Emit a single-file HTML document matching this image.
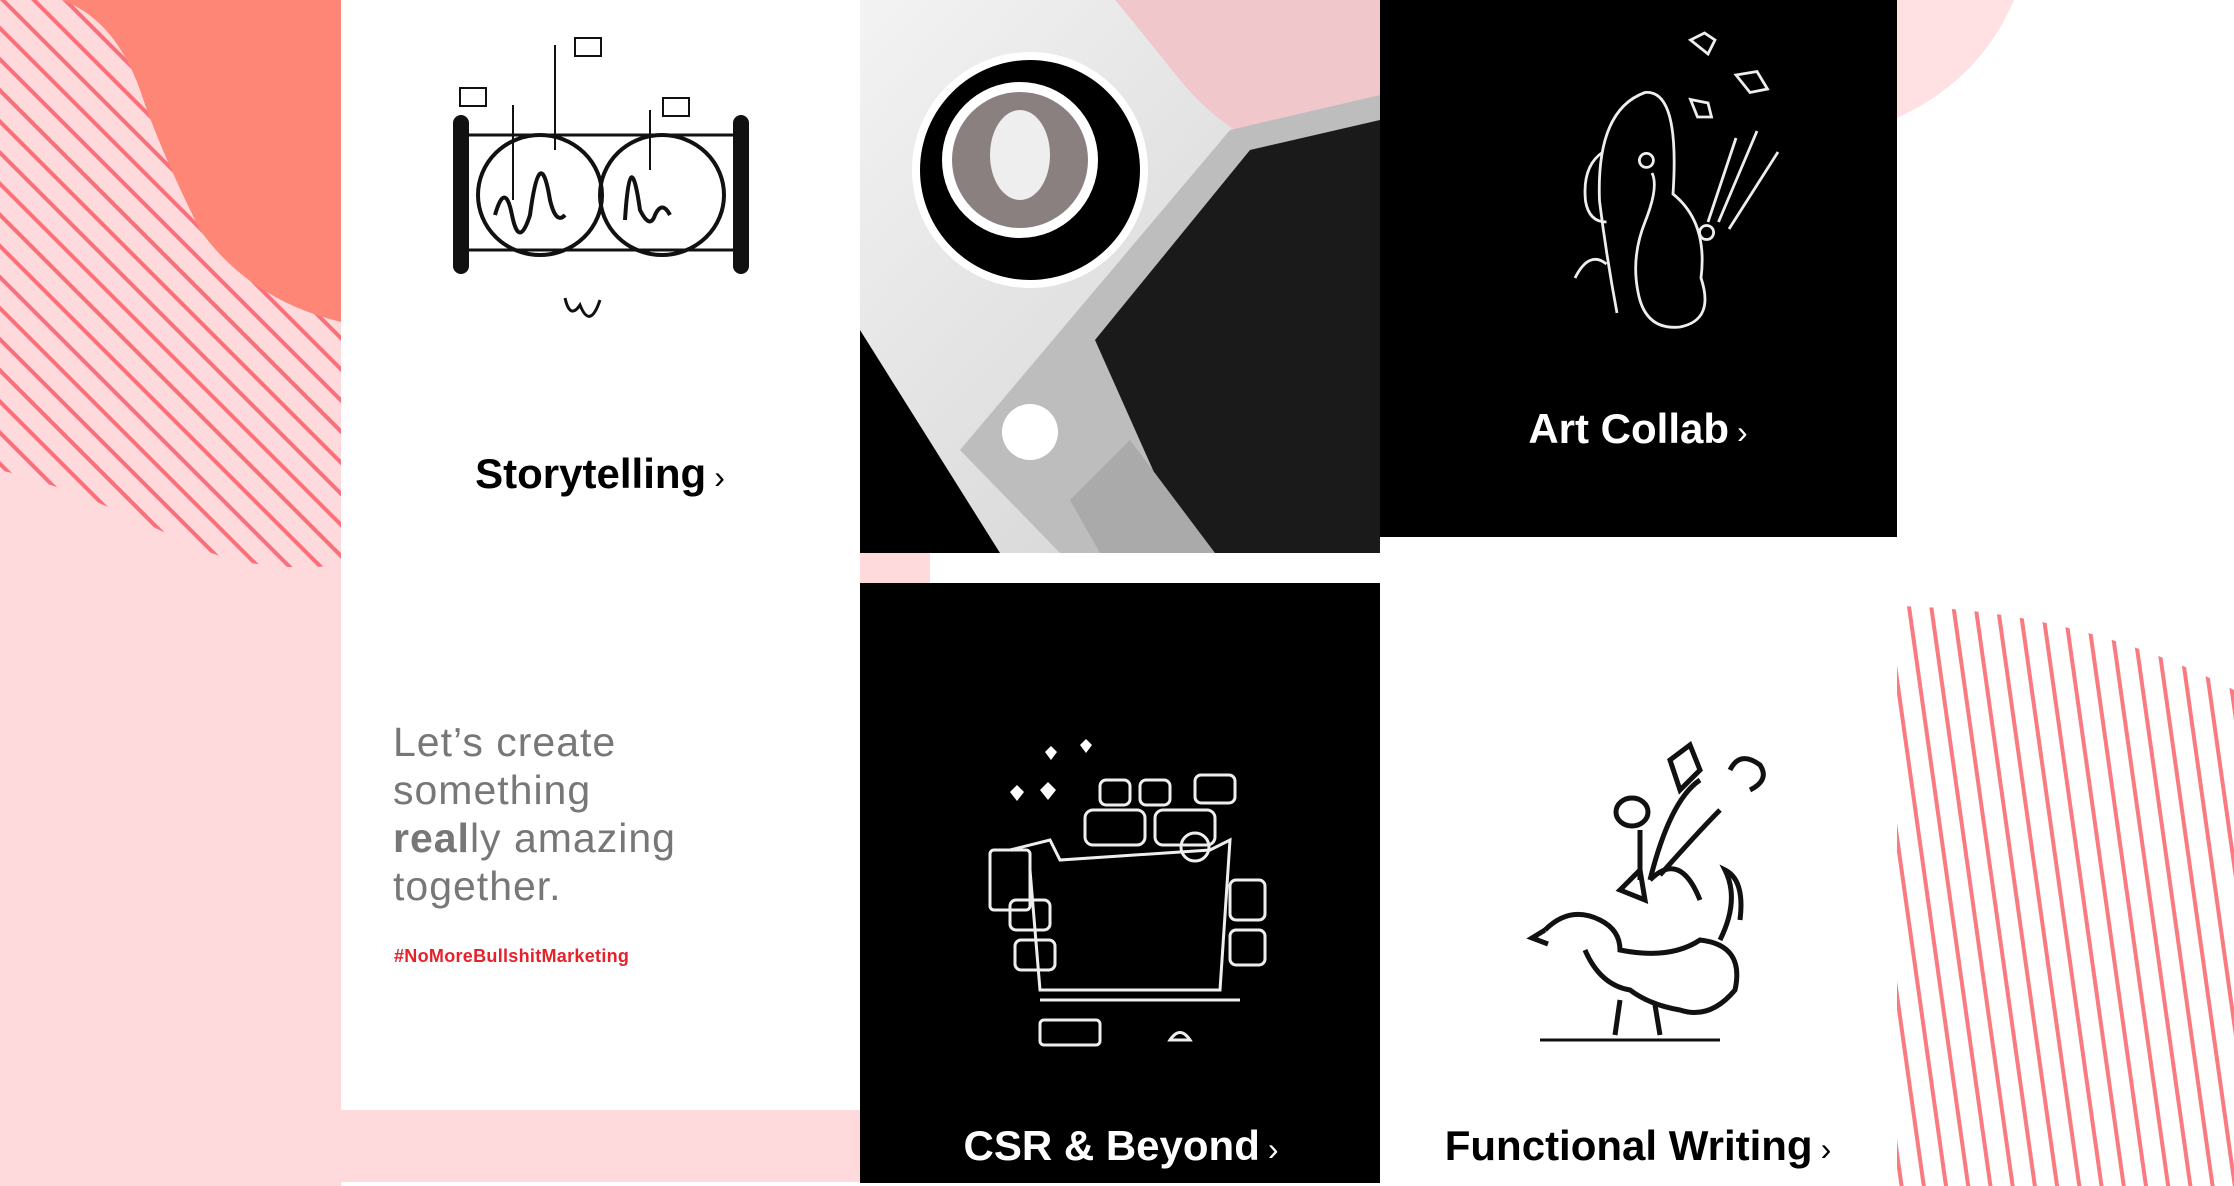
<!DOCTYPE html>
<html><head><meta charset="utf-8"><style>
*{margin:0;padding:0;box-sizing:border-box}
body{width:2234px;height:1186px;overflow:hidden;background:#fff;font-family:"Liberation Sans",sans-serif;position:relative}
.abs{position:absolute}
.lbl{position:absolute;font-weight:bold;font-size:42px;letter-spacing:0px;white-space:nowrap;transform:translateX(-50%)}
.lbl span{font-weight:normal;font-size:32px;margin-left:8px}
</style></head><body>
<svg class="abs" style="left:0;top:0" width="2234" height="1186">
<defs>
<pattern id="dg" width="22" height="22" patternUnits="userSpaceOnUse" patternTransform="rotate(-45)">
<rect width="22" height="22" fill="#ffdadd"/><rect x="0" width="4" height="22" fill="#f9707a"/></pattern>
<pattern id="vg" width="22" height="22" patternUnits="userSpaceOnUse" patternTransform="rotate(-8)">
<rect width="22" height="22" fill="#fff"/><rect x="0" width="4" height="22" fill="#f97a80"/></pattern>
<clipPath id="rc"><path d="M1897 606 L1897 1186 L2234 1186 L2234 690 Q2080 610 1897 606Z"/></clipPath>
<linearGradient id="ph" x1="0" y1="0" x2="1" y2="1"><stop offset="0" stop-color="#f3f3f3"/><stop offset="1" stop-color="#cfcfcf"/></linearGradient>
</defs>
<rect x="0" y="0" width="341" height="1186" fill="#ffdadd"/>
<path d="M0 0 L341 0 L341 565 Q250 575 180 540 Q80 490 0 470Z" fill="url(#dg)"/>
<path d="M62 0 L341 0 L341 322 Q250 300 200 230 Q160 150 140 90 Q115 20 62 0Z" fill="#fd8677"/>
<rect x="341" y="1110" width="520" height="72" fill="#ffdadd"/>
<path d="M1897 0 L2014 0 Q1980 80 1897 118Z" fill="#ffe0e3"/>
<rect x="1897" y="600" width="337" height="586" fill="url(#vg)" clip-path="url(#rc)"/>
<rect x="860" y="553" width="70" height="30" fill="#ffdadd"/>
<!-- photo -->
<rect x="860" y="0" width="520" height="553" fill="url(#ph)"/>
<path d="M860 300 L860 553 L1000 553 L860 330Z" fill="#000"/>
<path d="M1380 110 L1380 553 L1200 553 L1230 480Z" fill="#111"/>
<path d="M1115 0 L1380 0 L1380 120 L1290 160 Q1220 130 1180 80 Q1140 30 1115 0Z" fill="#f0c8cc"/>
<path d="M960 450 L1230 130 L1380 95 L1380 553 L1060 553Z" fill="#bdbdbd"/>
<path d="M1095 340 L1250 150 L1380 120 L1380 553 L1190 553Z" fill="#1a1a1a"/>
<path d="M1070 500 L1130 440 L1215 553 L1100 553Z" fill="#aaa"/>
<circle cx="1030" cy="432" r="28" fill="#fff"/>
<circle cx="1030" cy="170" r="118" fill="#fff"/>
<circle cx="1030" cy="170" r="110" fill="#000"/>
<circle cx="1020" cy="160" r="78" fill="#fff"/>
<circle cx="1020" cy="160" r="68" fill="#8a8080"/>
<ellipse cx="1020" cy="155" rx="30" ry="45" fill="#eee"/>
<rect x="1380" y="0" width="517" height="537" fill="#000"/>
<rect x="860" y="583" width="520" height="600" fill="#000"/>
<!-- glasses -->
<g fill="none" stroke="#111" stroke-width="4">
<rect x="455" y="117" width="12" height="155" rx="6" fill="#111"/>
<rect x="735" y="117" width="12" height="155" rx="6" fill="#111"/>
<path d="M467 135 L735 135 M467 250 L735 250" stroke-width="3"/>
<ellipse cx="540" cy="195" rx="62" ry="60"/><ellipse cx="662" cy="195" rx="62" ry="60"/>
<path d="M495 215 Q505 180 512 215 T530 215 Q540 140 550 200 Q556 225 565 215"/>
<path d="M625 220 Q630 140 640 210 Q650 230 655 215 Q662 200 670 215"/>
<path d="M565 298 Q570 320 580 305 Q590 330 600 300" stroke-width="3"/>
<path d="M513 105 L513 200 M555 45 L555 150 M650 110 L650 170" stroke-width="2"/>
<rect x="460" y="88" width="26" height="18" stroke-width="2"/><rect x="575" y="38" width="26" height="18" stroke-width="2"/><rect x="663" y="98" width="26" height="18" stroke-width="2"/>
</g>
<!-- art collab -->
<g fill="none" stroke="#eee" stroke-width="4" transform="translate(525,12) scale(0.7)">
<path d="M1535 270 Q1530 140 1600 115 Q1650 110 1640 260 Q1690 300 1680 380 Q1700 440 1650 450 Q1600 455 1590 400 Q1580 350 1600 300 Q1620 250 1610 230"/>
<path d="M1535 270 Q1545 350 1560 430 M1540 200 Q1510 220 1515 270 Q1520 300 1545 300"/>
<path d="M1500 380 Q1520 340 1545 360"/>
<circle cx="1602" cy="212" r="10"/><circle cx="1688" cy="315" r="10"/>
<path d="M1690 300 L1730 180 M1705 300 L1760 170 M1720 310 L1790 200"/>
<path d="M1665 40 L1685 30 L1700 40 L1690 60Z M1730 90 L1760 85 L1775 110 L1750 115Z M1665 125 L1690 130 L1695 150 L1675 150Z"/>
</g>
<!-- CSR -->
<g fill="none" stroke="#eee" stroke-width="3">
<rect x="1100" y="780" width="30" height="25" rx="6"/><rect x="1140" y="780" width="30" height="25" rx="6"/><rect x="1195" y="775" width="40" height="28" rx="6"/>
<rect x="1085" y="810" width="60" height="35" rx="8"/><rect x="1155" y="810" width="60" height="35" rx="8"/>
<path d="M1010 850 L1050 840 L1060 860 L1210 850 L1230 840 L1220 990 L1040 990 L1030 870"/>
<rect x="990" y="850" width="40" height="60" rx="4"/>
<rect x="1010" y="900" width="40" height="30" rx="6"/><rect x="1015" y="940" width="40" height="30" rx="6"/><rect x="1230" y="880" width="35" height="40" rx="6"/><rect x="1230" y="930" width="35" height="35" rx="6"/>
<path d="M1040 1000 L1240 1000"/><rect x="1040" y="1020" width="60" height="25" rx="4"/><path d="M1170 1040 Q1180 1025 1190 1040Z"/>
<circle cx="1195" cy="847" r="14"/>
</g>
<g fill="#fff"><path d="M1045 752 l6 -6 6 6 -6 8z"/><path d="M1080 745 l6 -6 6 6 -6 8z"/><path d="M1010 792 l7 -7 7 7 -7 9z"/><path d="M1040 790 l8 -8 8 8 -8 10z"/></g>
<!-- bird -->
<g fill="none" stroke="#111" stroke-width="5">
<path d="M1545 930 Q1570 905 1600 920 Q1620 930 1620 950 Q1670 960 1700 940 Q1745 945 1735 990 Q1710 1020 1680 1010 Q1650 1005 1630 990 Q1600 985 1585 950"/>
<path d="M1545 930 L1532 938 L1548 944"/>
<path d="M1720 940 Q1740 900 1725 870 Q1745 880 1740 920"/>
<path d="M1620 890 L1640 870 L1645 900Z M1650 880 Q1680 850 1700 900"/>
<path d="M1640 880 L1640 830 M1650 880 Q1670 800 1700 780 M1660 875 Q1700 830 1720 810"/>
<ellipse cx="1632" cy="812" rx="16" ry="14"/><path d="M1670 760 L1690 745 L1700 770 L1680 790Z"/><path d="M1730 770 Q1740 750 1760 765 Q1770 780 1750 790"/>
<path d="M1540 1040 L1720 1040" stroke-width="3"/><path d="M1620 1000 L1615 1035 M1655 1005 L1660 1035"/>
</g>
</svg>
<div class="lbl" style="left:600px;top:450px;color:#000">Storytelling<span>›</span></div>
<div class="lbl" style="left:1638px;top:405px;color:#fff">Art Collab<span>›</span></div>
<div class="lbl" style="left:1121px;top:1122px;color:#fff">CSR &amp; Beyond<span>›</span></div>
<div class="lbl" style="left:1638px;top:1122px;color:#000">Functional Writing<span>›</span></div>
<div class="abs" style="left:393px;top:718px;font-size:41px;line-height:48px;color:#777;letter-spacing:1px">Let’s create<br>something<br><b>real</b>ly amazing<br>together.</div>
<div class="abs" style="left:394px;top:946px;font-size:18px;font-weight:bold;color:#e8202a;letter-spacing:0.3px">#NoMoreBullshitMarketing</div>
</body></html>
